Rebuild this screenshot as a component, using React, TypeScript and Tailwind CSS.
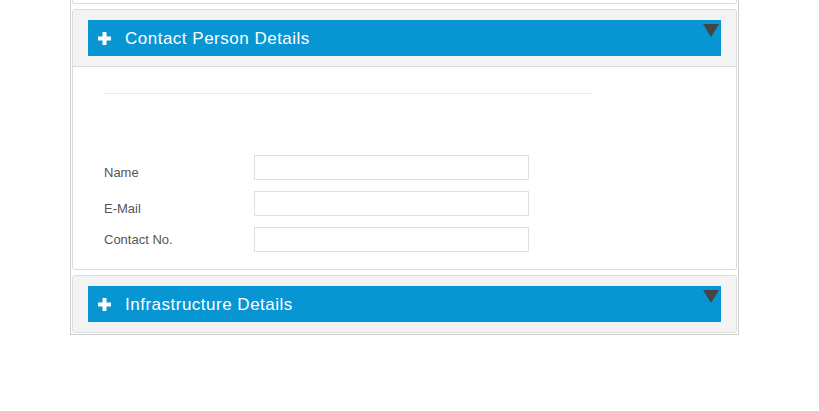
import React from "react"

function Plus() {
  return (
    <svg width="13" height="13" viewBox="0 0 13 13" className="shrink-0">
      <rect x="4.5" y="0" width="4" height="13" fill="#fff" />
      <rect x="0" y="4.5" width="13" height="4" fill="#fff" />
    </svg>
  )
}

function Caret() {
  return (
    <svg width="16" height="13" viewBox="0 0 16 13" className="absolute right-[2px] top-[4px]">
      <polygon points="0,0 16,0 8,13" fill="#444" />
    </svg>
  )
}

function PanelHeader({ title, open }: { title: string; open?: boolean }) {
  return (
    <div className={`bg-[#f3f3f3] px-[15px] py-[10px] ${open ? "border-b border-[#dcdcdc]" : ""}`}>
      <div className="relative flex h-[36px] items-center gap-[14px] bg-[#0795d4] pl-[10px] text-[17px] tracking-[0.5px] text-white">
        <Plus />
        <span className="leading-none">{title}</span>
        <Caret />
      </div>
    </div>
  )
}

const fields = [
  { label: "Name", pad: "pt-[10px]" },
  { label: "E-Mail", pad: "pt-[10px]" },
  { label: "Contact No.", pad: "pt-[5px]" },
]

export default function App() {
  return (
    <div className="min-h-[411px] w-[819px] bg-white" style={{ fontFamily: '"Liberation Sans", Arial, sans-serif' }}>
      <div className="ml-[70px] flex w-[669px] flex-col gap-[5px] border border-t-0 border-[#cccccc] p-px pt-0">
        {/* previous panel, cut off */}
        <div className="h-[4px] rounded-b-[3px] border border-t-0 border-[#dcdcdc] bg-white" />

        {/* Contact Person Details */}
        <div className="overflow-hidden rounded-[3px] border border-[#dcdcdc]">
          <PanelHeader title="Contact Person Details" open />
          <div className="h-[202px] bg-white pl-[31px] pt-[26px]">
            <div className="h-px w-[488px] bg-[#e8e8e8]" />
            <div className="mt-[61px] flex flex-col gap-[11px]">
              {fields.map((f) => (
                <div key={f.label} className="flex items-start">
                  <label className={`w-[150px] text-[13px] leading-[15px] text-[#555] ${f.pad}`}>{f.label}</label>
                  <input className="h-[25px] w-[275px] border border-[#e0e0e0] bg-white px-2 text-[13px] outline-none" />
                </div>
              ))}
            </div>
          </div>
        </div>

        {/* Infrastructure Details */}
        <div className="overflow-hidden rounded-[3px] border border-[#dcdcdc]">
          <PanelHeader title="Infrastructure Details" />
        </div>
      </div>
    </div>
  )
}
